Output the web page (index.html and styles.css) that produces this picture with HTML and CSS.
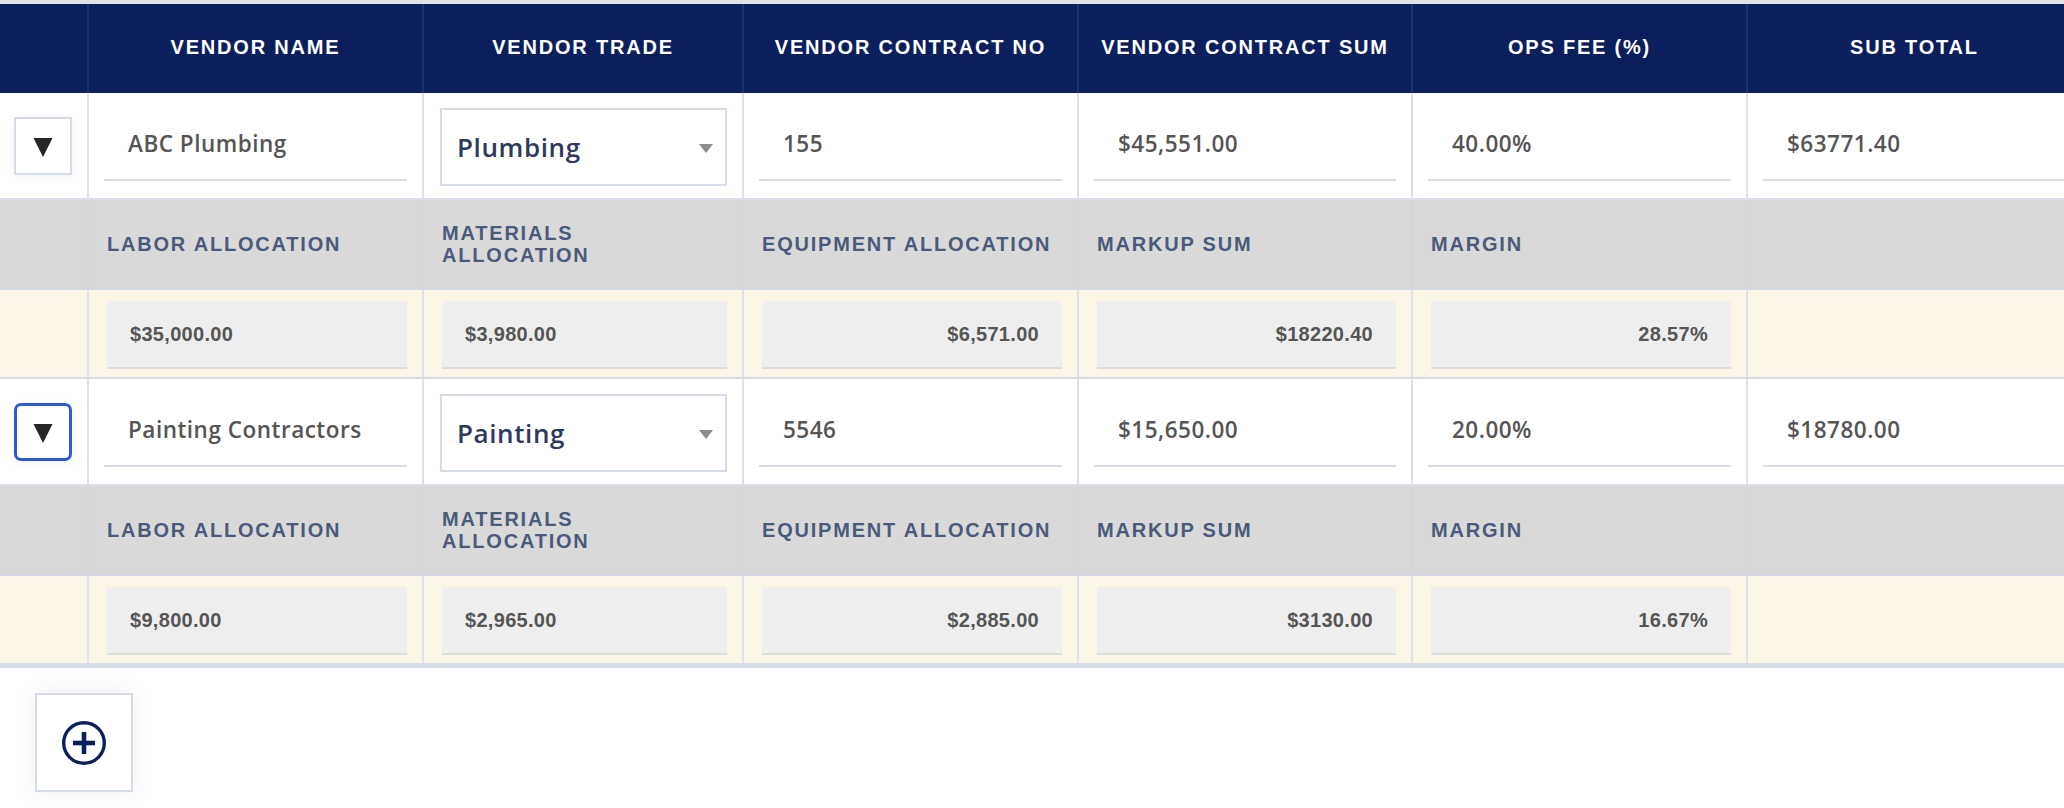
FILE: index.html
```html
<!DOCTYPE html>
<html lang="en">
<head>
<meta charset="utf-8">
<title>Vendors</title>
<link rel="stylesheet" href="styles.css">
</head>
<body>
<div class="page">
  <div class="table">
    <div class="row head">
      <div class="cell"></div>
      <div class="cell">Vendor Name</div>
      <div class="cell">Vendor Trade</div>
      <div class="cell">Vendor Contract No</div>
      <div class="cell">Vendor Contract Sum</div>
      <div class="cell">Ops Fee (%)</div>
      <div class="cell">Sub Total</div>
    </div>

    <div class="row main">
      <div class="cell"><button class="toggle"><svg viewBox="0 0 20 20" width="20" height="20"><polygon points="0.5,1 19.5,1 10,20" fill="#262626"/></svg></button></div>
      <div class="cell"><div class="input">ABC Plumbing</div></div>
      <div class="cell"><div class="select"><span>Plumbing</span><span class="caret"></span></div></div>
      <div class="cell"><div class="input">155</div></div>
      <div class="cell"><div class="input">$45,551.00</div></div>
      <div class="cell"><div class="input">40.00%</div></div>
      <div class="cell"><div class="input">$63771.40</div></div>
    </div>
    <div class="row subhead">
      <div class="cell"></div>
      <div class="cell">Labor Allocation</div>
      <div class="cell">Materials Allocation</div>
      <div class="cell">Equipment Allocation</div>
      <div class="cell">Markup Sum</div>
      <div class="cell">Margin</div>
      <div class="cell"></div>
    </div>
    <div class="row subvals">
      <div class="cell"></div>
      <div class="cell"><div class="box">$35,000.00</div></div>
      <div class="cell"><div class="box">$3,980.00</div></div>
      <div class="cell"><div class="box right">$6,571.00</div></div>
      <div class="cell"><div class="box right">$18220.40</div></div>
      <div class="cell"><div class="box right">28.57%</div></div>
      <div class="cell"></div>
    </div>

    <div class="row main">
      <div class="cell"><button class="toggle focused"><svg viewBox="0 0 20 20" width="20" height="20"><polygon points="0.5,1 19.5,1 10,20" fill="#262626"/></svg></button></div>
      <div class="cell"><div class="input">Painting Contractors</div></div>
      <div class="cell"><div class="select"><span>Painting</span><span class="caret"></span></div></div>
      <div class="cell"><div class="input">5546</div></div>
      <div class="cell"><div class="input">$15,650.00</div></div>
      <div class="cell"><div class="input">20.00%</div></div>
      <div class="cell"><div class="input">$18780.00</div></div>
    </div>
    <div class="row subhead">
      <div class="cell"></div>
      <div class="cell">Labor Allocation</div>
      <div class="cell">Materials Allocation</div>
      <div class="cell">Equipment Allocation</div>
      <div class="cell">Markup Sum</div>
      <div class="cell">Margin</div>
      <div class="cell"></div>
    </div>
    <div class="row subvals last">
      <div class="cell"></div>
      <div class="cell"><div class="box">$9,800.00</div></div>
      <div class="cell"><div class="box">$2,965.00</div></div>
      <div class="cell"><div class="box right">$2,885.00</div></div>
      <div class="cell"><div class="box right">$3130.00</div></div>
      <div class="cell"><div class="box right">16.67%</div></div>
      <div class="cell"></div>
    </div>
  </div>

  <button class="add" aria-label="Add vendor">
    <svg viewBox="0 0 44 44" width="44" height="44">
      <circle cx="22" cy="22" r="20.3" fill="none" stroke="#0b1f5c" stroke-width="3.4"/>
      <rect x="11" y="19.7" width="22" height="4.6" fill="#0b1f5c"/>
      <rect x="19.7" y="11" width="4.6" height="22" fill="#0b1f5c"/>
    </svg>
  </button>
</div>
</body>
</html>
```
FILE: styles.css
```css
* { box-sizing: border-box; }

html, body {
  margin: 0;
  padding: 0;
  background: #ffffff;
}

body {
  width: 2064px;
  height: 808px;
  overflow: hidden;
  font-family: "Liberation Sans", Arial, sans-serif;
}

.page {
  width: 2064px;
}

.table {
  width: 2083px;
}

.row {
  display: grid;
  grid-template-columns: 89px 335px 320px 335px 334px 335px 335px;
}

.cell {
  display: flex;
  border-right: 2px solid #dde1eb;
  min-width: 0;
}

/* header */
.head {
  height: 93px;
  border-top: 4px solid #e2e2e2;
  background: #0b1f5c;
}
.head .cell {
  align-items: center;
  justify-content: center;
  border-right-color: #1d3170;
  color: #ffffff;
  font-weight: bold;
  font-size: 20px;
  letter-spacing: 1.8px;
  text-transform: uppercase;
  white-space: nowrap;
  padding-bottom: 2px;
}

/* main rows */
.main {
  height: 107px;
  border-bottom: 2px solid #d9deea;
  background: #ffffff;
}
.main .cell {
  align-items: flex-start;
  padding: 15px 15px 0 15px;
}
.main .cell:first-child {
  padding: 24px 0 0 14px;
}

.toggle {
  width: 58px;
  height: 58px;
  padding: 0;
  margin: 0;
  border: 2px solid #d6dbe8;
  background: #ffffff;
  display: flex;
  align-items: center;
  justify-content: center;
  box-shadow: 0 2px 10px rgba(20, 30, 60, 0.05);
}
.toggle svg { display: block; margin-top: 2px; }
.toggle.focused {
  border: 3px solid #2a5bd3;
  border-radius: 7px;
}

.input {
  flex: 1;
  height: 73px;
  border-bottom: 2px solid #d8dde9;
  padding-left: 24px;
  display: flex;
  align-items: center;
  font-family: "Open Sans", "Liberation Sans", sans-serif;
  font-size: 22.5px;
  font-weight: 600;
  letter-spacing: 0.5px;
  color: #555555;
  white-space: nowrap;
}

.select {
  flex: 1;
  height: 78px;
  margin-left: 1px;
  border: 2px solid #d5dbe8;
  padding: 0 12px 0 15px;
  display: flex;
  align-items: center;
  justify-content: space-between;
  font-family: "Open Sans", "Liberation Sans", sans-serif;
  font-size: 26px;
  font-weight: 600;
  letter-spacing: 0.6px;
  color: #2e3a5c;
}
.caret {
  width: 0;
  height: 0;
  border-left: 7px solid transparent;
  border-right: 7px solid transparent;
  border-top: 9px solid #8c8c8c;
  margin-top: 2px;
}

/* sub header */
.subhead {
  height: 90px;
  background: #d9d9d9;
  border-bottom: 2px solid #d3d8e4;
}
.subhead .cell {
  align-items: center;
  padding: 0 18px;
  border-right-color: #d2d7e2;
  color: #4b5a7a;
  font-weight: bold;
  font-size: 20px;
  line-height: 22px;
  letter-spacing: 1.8px;
  text-transform: uppercase;
}

/* sub values */
.subvals {
  height: 89px;
  background: #faf5e4;
  border-bottom: 2px solid #d6dbe7;
}
.subvals.last {
  height: 92px;
  border-bottom: 5px solid #d8dde9;
}
.subvals .cell {
  align-items: flex-start;
  padding: 11px 15px 0 18px;
}

.box {
  flex: 1;
  height: 68px;
  background: #eeeeee;
  border-bottom: 2px solid #dcdcdc;
  padding: 0 23px;
  display: flex;
  align-items: center;
  font-weight: bold;
  font-size: 20px;
  letter-spacing: 0.3px;
  color: #555555;
  white-space: nowrap;
}
.box.right {
  justify-content: flex-end;
}

/* add button */
.add {
  margin: 25px 0 0 35px;
  width: 98px;
  height: 99px;
  padding: 0;
  border: 2px solid #d6dce9;
  background: #ffffff;
  display: flex;
  align-items: center;
  justify-content: center;
  box-shadow: 0 0 22px rgba(20, 30, 70, 0.06);
}
.add svg { display: block; }
```
